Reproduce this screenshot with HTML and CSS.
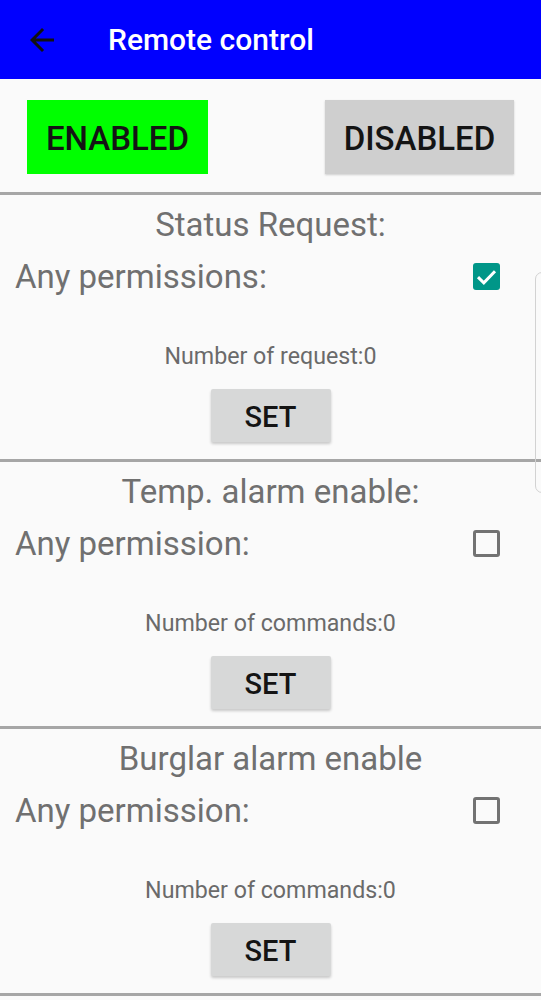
FILE: index.html
```html
<!DOCTYPE html>
<html>
<head>
<meta charset="utf-8">
<link rel="stylesheet" href="styles.css">
</head>
<body>
<header class="appbar">
  <span class="back">
    <svg viewBox="0 0 24 24" width="36" height="36"><path d="M20 11H7.83l5.59-5.59L12 4l-8 8 8 8 1.41-1.41L7.83 13H20v-2z" fill="#111"/></svg>
  </span>
  <h1 class="title">Remote control</h1>
</header>
<main class="content">
  <div class="toggle-row">
    <button class="toggle toggle-on">ENABLED</button>
    <button class="toggle toggle-off">DISABLED</button>
  </div>
  <div class="divider"></div>
  <section class="block">
    <div class="block-title">Status Request:</div>
    <div class="perm-row">
      <span class="perm-label">Any permissions:</span>
      <span class="check check-on">
        <svg viewBox="0 0 27 27" width="27" height="27"><path d="M5 14.2l5.8 5.6 11.2-11.6" fill="none" stroke="#fff" stroke-width="3"/></svg>
      </span>
    </div>
    <div class="count">Number of request:0</div>
    <button class="set">SET</button>
  </section>
  <div class="divider"></div>
  <section class="block">
    <div class="block-title">Temp. alarm enable:</div>
    <div class="perm-row">
      <span class="perm-label">Any permission:</span>
      <span class="check check-off"></span>
    </div>
    <div class="count">Number of commands:0</div>
    <button class="set">SET</button>
  </section>
  <div class="divider"></div>
  <section class="block">
    <div class="block-title">Burglar alarm enable</div>
    <div class="perm-row">
      <span class="perm-label">Any permission:</span>
      <span class="check check-off"></span>
    </div>
    <div class="count">Number of commands:0</div>
    <button class="set">SET</button>
  </section>
  <div class="divider"></div>
  <div class="edge-handle"></div>
</main>
</body>
</html>
```
FILE: styles.css
```css
html, body {
  margin: 0;
  padding: 0;
}
body {
  background: #fafafa;
  font-family: Roboto, "Liberation Sans", sans-serif;
  width: 541px;
  height: 1000px;
  overflow: hidden;
}
.appbar {
  height: 79px;
  background: #0000ff;
  display: flex;
  align-items: center;
}
.back {
  width: 36px;
  height: 36px;
  margin-left: 24px;
  margin-top: 1px;
  display: flex;
}
.title {
  margin: 0 0 0 48px;
  color: #fff;
  font-size: 30px;
  font-weight: 500;
  line-height: 36px;
  letter-spacing: 0;
}
.content {
  position: relative;
}
.toggle-row {
  display: flex;
  justify-content: space-between;
  padding: 21px 27px 18px 27px;
}
.toggle {
  height: 74px;
  border: none;
  font-family: Roboto, "Liberation Sans", sans-serif;
  font-size: 33px;
  font-weight: 500;
  color: #141414;
  padding: 3px 0 0 0;
}
.toggle-on {
  width: 181px;
  background: #00ff00;
}
.toggle-off {
  width: 189px;
  background: #cfcfcf;
  box-shadow: 0 1px 2px rgba(0,0,0,0.18);
}
.divider {
  height: 3px;
  background: #a6a6a6;
}
.block {
  height: 264px;
  display: flex;
  flex-direction: column;
  align-items: center;
}
.block-title {
  margin-top: 12px;
  font-size: 33px;
  line-height: 36px;
  color: #707070;
}
.perm-row {
  margin-top: 13px;
  height: 40px;
  align-self: stretch;
  display: flex;
  align-items: center;
  justify-content: space-between;
  padding: 0 41px 0 15px;
}
.perm-label {
  font-size: 33px;
  line-height: 40px;
  color: #707070;
  margin-top: 1px;
}
.check {
  width: 27px;
  height: 27px;
  box-sizing: border-box;
  border-radius: 3px;
  display: block;
}
.check svg {
  display: block;
}
.check-on {
  background: #009688;
}
.check-off {
  border: 3px solid #727272;
}
.count {
  margin-top: 47px;
  font-size: 23.2px;
  line-height: 26px;
  color: #6a6a6a;
}
.set {
  margin-top: 20px;
  width: 120px;
  height: 53px;
  border: none;
  border-radius: 2px;
  background: #d7d8d8;
  box-shadow: 0 2px 3px rgba(0,0,0,0.2);
  font-family: Roboto, "Liberation Sans", sans-serif;
  font-size: 29px;
  font-weight: 500;
  color: #141414;
  padding: 2px 0 0 0;
}
.edge-handle {
  position: absolute;
  left: 535px;
  top: 193px;
  width: 14px;
  height: 221px;
  border: 1px solid #d2d2d2;
  border-radius: 8px;
  box-sizing: border-box;
}
```
